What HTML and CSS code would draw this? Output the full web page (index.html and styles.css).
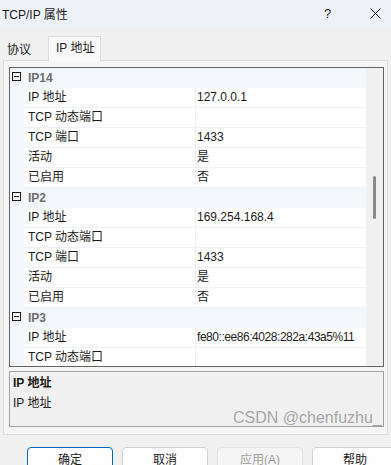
FILE: index.html
```html
<!DOCTYPE html>
<html lang="zh">
<head>
<meta charset="utf-8">
<link rel="stylesheet" href="styles.css">
</head>
<body>
<div class="dialog">
  <div class="titlebar">
    <span class="title">TCP/IP 属性</span>
    <span class="help">?</span>
    <span class="close">
      <svg width="11" height="11" viewBox="0 0 11 11"><path d="M0.5 0.5L10.5 10.5M10.5 0.5L0.5 10.5" stroke="#1a1a1a" stroke-width="1" fill="none"/></svg>
    </span>
  </div>
  <div class="tabs">
    <div class="tab">协议</div>
    <div class="tab active">IP 地址</div>
  </div>
  <div class="panel">
    <div class="grid">
      <div class="rows">
        <div class="cat"><span class="toggle"></span><span class="cat-name">IP14</span></div>
        <div class="row"><span class="name">IP 地址</span><span class="val">127.0.0.1</span></div>
        <div class="row"><span class="name">TCP 动态端口</span><span class="val"></span></div>
        <div class="row"><span class="name">TCP 端口</span><span class="val">1433</span></div>
        <div class="row"><span class="name">活动</span><span class="val">是</span></div>
        <div class="row"><span class="name">已启用</span><span class="val">否</span></div>
        <div class="cat"><span class="toggle"></span><span class="cat-name">IP2</span></div>
        <div class="row"><span class="name">IP 地址</span><span class="val">169.254.168.4</span></div>
        <div class="row"><span class="name">TCP 动态端口</span><span class="val"></span></div>
        <div class="row"><span class="name">TCP 端口</span><span class="val">1433</span></div>
        <div class="row"><span class="name">活动</span><span class="val">是</span></div>
        <div class="row"><span class="name">已启用</span><span class="val">否</span></div>
        <div class="cat"><span class="toggle"></span><span class="cat-name">IP3</span></div>
        <div class="row"><span class="name">IP 地址</span><span class="val long">fe80::ee86:4028:282a:43a5%11</span></div>
        <div class="row"><span class="name">TCP 动态端口</span><span class="val"></span></div>
      </div>
      <div class="scrollbar"><div class="thumb"></div></div>
    </div>
    <div class="desc">
      <div class="desc-title">IP 地址</div>
      <div class="desc-text">IP 地址</div>
    </div>
  </div>
  <div class="buttons">
    <div class="btn default">确定</div>
    <div class="btn">取消</div>
    <div class="btn disabled">应用(A)</div>
    <div class="btn">帮助</div>
  </div>
  <div class="watermark">CSDN @chenfuzhu_</div>
</div>
</body>
</html>
```
FILE: styles.css
```css
* { box-sizing: border-box; }
html, body { margin: 0; padding: 0; }
body {
  width: 391px;
  height: 465px;
  overflow: hidden;
  background: #f0f0f0;
  font-family: "Liberation Sans", "Noto Sans CJK SC", sans-serif;
  font-size: 12px;
  color: #1a1a1a;
}
.dialog { position: relative; height: 465px; }
.titlebar {
  height: 27px;
  background: #eef2f8;
  display: flex;
  align-items: center;
  padding-left: 2px;
}
.title { flex: 1; font-size: 12px; }
.help { width: 46px; font-size: 13px; }
.close { width: 16px; display: flex; align-items: center; margin-right: 5px; }
.tabs {
  height: 33px;
  display: flex;
  align-items: flex-end;
  padding-left: 2px;
}
.tab {
  height: 22px;
  padding: 0 5px;
  line-height: 24px;
  width: 46px;
  white-space: nowrap;
  flex-shrink: 0;
}
.tab.active {
  height: 25px;
  width: 53px;
  line-height: 22px;
  padding: 0 0 0 7px;
  background: #f9f9f9;
  border: 1px solid #dcdcdc;
  border-bottom: none;
  margin-bottom: -1px;
  position: relative;
}
.panel {
  margin: 0 3px;
  height: 375px;
  background: #f5f5f5;
  border: 1px solid #dcdcdc;
  padding: 6px 3px 0 5px;
}
.grid {
  height: 300px;
  border: 1px solid #646464;
  display: flex;
  background: #ffffff;
}
.rows { flex: 1; min-width: 0; overflow: hidden; }
.cat {
  height: 20px;
  background: #f3f6fa;
  display: flex;
  align-items: center;
  padding-left: 2px;
}
.toggle {
  width: 9px;
  height: 9px;
  border: 1px solid #1a1a1a;
  position: relative;
  margin-right: 7px;
  margin-top: -4px;
  background: #fff;
  flex-shrink: 0;
}
.toggle::after {
  content: "";
  position: absolute;
  left: 1px;
  right: 1px;
  top: 3px;
  height: 1px;
  background: #1a1a1a;
}
.cat-name { font-weight: bold; color: #6d6d6d; }
.row {
  height: 20px;
  display: flex;
  border-left: 14px solid #f3f6fa;
}
.name, .val {
  height: 20px;
  line-height: 19px;
  border-bottom: 1px solid #eef2f8;
  white-space: nowrap;
}
.name {
  width: 172px;
  flex-shrink: 0;
  padding-left: 4px;
  border-right: 1px solid #eef2f8;
}
.val { flex: 1; min-width: 0; overflow: hidden; padding-left: 1px; }
.val.long { letter-spacing: -0.45px; }
.scrollbar {
  width: 17px;
  flex-shrink: 0;
  background: #f0f0f0;
  position: relative;
}
.thumb {
  position: absolute;
  left: 7px;
  top: 108px;
  width: 3px;
  height: 43px;
  border-radius: 2px;
  background: #8a8a8a;
}
.desc {
  margin-top: 4px;
  height: 56px;
  border: 1px solid #a0a0a0;
  background: #f0f0f0;
  padding: 2px 3px;
}
.desc-title { font-weight: bold; line-height: 18px; }
.desc-text { line-height: 18px; margin-top: 2px; }
.buttons {
  display: flex;
  gap: 9px;
  padding-left: 27px;
  margin-top: 12px;
}
.btn {
  width: 86px;
  flex-shrink: 0;
  height: 24px;
  border: 1px solid #d0d0d0;
  border-radius: 4px;
  background: #fdfdfd;
  text-align: center;
  line-height: 24px;
  font-size: 12px;
}
.btn.default { border-color: #0067c0; }
.btn.disabled { background: #f5f5f5; color: #a0a0a0; border-color: #e5e5e5; }
.watermark {
  position: absolute;
  left: 233px;
  top: 409px;
  font-size: 16px;
  color: rgba(130, 130, 130, 0.7);
  font-family: "Liberation Sans", sans-serif;
  white-space: nowrap;
}
```
